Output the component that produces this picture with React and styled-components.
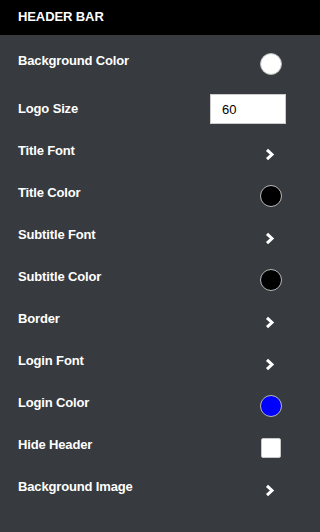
import React from "react";
import styled, { createGlobalStyle } from "styled-components";

const Global = createGlobalStyle`
  html, body {
    margin: 0;
    padding: 0;
    background: #373a3e;
  }
  body {
    font-family: "Liberation Sans", Arial, sans-serif;
  }
`;

const Panel = styled.div`
  min-height: 532px;
  background: #373a3e;
  color: #ffffff;
  font-family: "Liberation Sans", Arial, sans-serif;
`;

const Header = styled.div`
  height: 35px;
  background: #000000;
  display: flex;
  align-items: center;
  padding: 0 18px 2px;
  box-sizing: border-box;
  font-size: 13px;
  font-weight: 700;
  letter-spacing: -0.1px;
`;

const List = styled.div`
  width: 300px;
  box-sizing: border-box;
  display: flex;
  flex-direction: column;
  padding: 8px 14px 0 18px;
`;

const Row = styled.div`
  display: flex;
  align-items: center;
  justify-content: space-between;
  min-height: ${(p) => (p.$tall ? 48 : 42)}px;
`;

const Label = styled.span`
  font-size: 13px;
  font-weight: 700;
  letter-spacing: -0.15px;
  line-height: 15px;
  margin-bottom: ${(p) => p.$lift ?? 8}px;
`;

const Swatch = styled.span`
  width: 22px;
  height: 22px;
  border-radius: 50%;
  box-sizing: border-box;
  border: 1px solid #b8b8b8;
  background: ${(p) => p.$color};
  margin-right: 4px;
`;

const NumberInput = styled.input`
  width: 76px;
  height: 30px;
  box-sizing: border-box;
  border: 1px solid #cccccc;
  background: #ffffff;
  padding: 0 0 0 11px;
  font-family: "Liberation Sans", Arial, sans-serif;
  font-size: 13px;
  color: #000000;
  outline: none;
`;

const Check = styled.span`
  width: 20px;
  height: 20px;
  box-sizing: border-box;
  background: #ffffff;
  border: 1px solid #c8c8c8;
  border-radius: 2px;
  margin-right: 5px;
`;

const ChevronBox = styled.span`
  width: 10px;
  height: 13px;
  display: flex;
  margin-right: 11px;
`;

const Chevron = () => (
  <ChevronBox>
    <svg width="10" height="13" viewBox="0 0 10 13">
      <polyline
        points="2,1.8 7,6.5 2,11.2"
        fill="none"
        stroke="#ffffff"
        strokeWidth="3"
        strokeLinejoin="miter"
      />
    </svg>
  </ChevronBox>
);

const rows = [
  { label: "Background Color", type: "color", color: "#ffffff" },
  { label: "Logo Size", type: "input", value: "60" },
  { label: "Title Font", type: "chevron" },
  { label: "Title Color", type: "color", color: "#000000" },
  { label: "Subtitle Font", type: "chevron" },
  { label: "Subtitle Color", type: "color", color: "#000000" },
  { label: "Border", type: "chevron" },
  { label: "Login Font", type: "chevron" },
  { label: "Login Color", type: "color", color: "#0000ff" },
  { label: "Hide Header", type: "check" },
  { label: "Background Image", type: "chevron" },
];

export default function App() {
  return (
    <>
      <Global />
      <Panel>
        <Header>HEADER BAR</Header>
        <List>
          {rows.map((r) => (
            <Row key={r.label} $tall={r.type === "input"}>
              <Label $lift={r.type === "input" ? 2 : undefined}>{r.label}</Label>
              {r.type === "color" && <Swatch $color={r.color} />}
              {r.type === "input" && <NumberInput type="text" defaultValue={r.value} />}
              {r.type === "chevron" && <Chevron />}
              {r.type === "check" && <Check />}
            </Row>
          ))}
        </List>
      </Panel>
    </>
  );
}
